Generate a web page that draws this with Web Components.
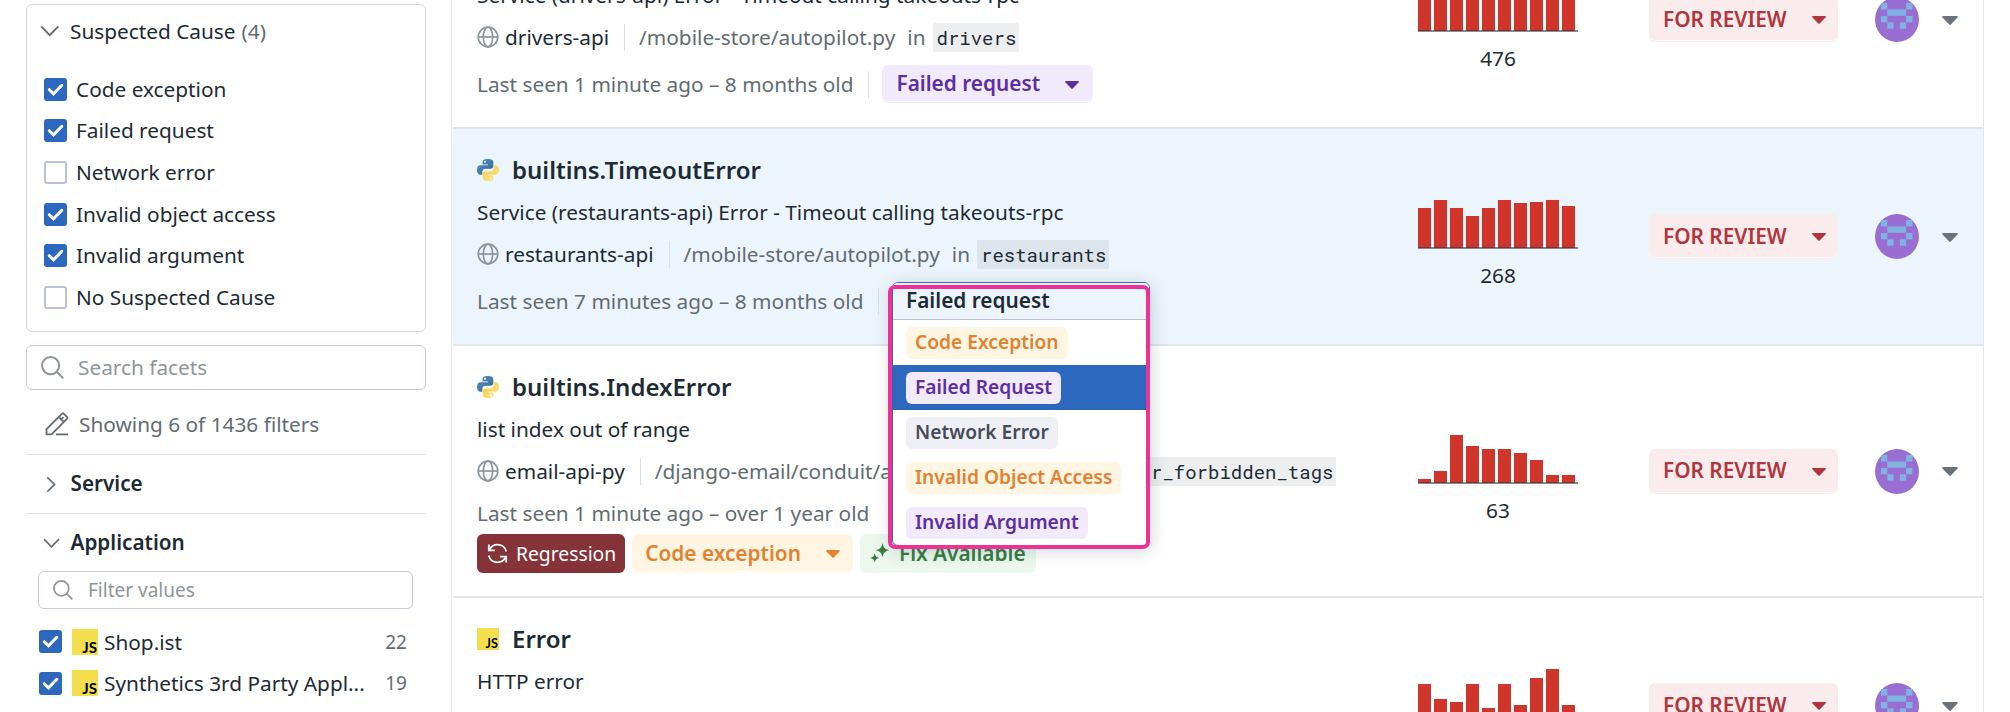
<!DOCTYPE html>
<html lang="en">
<head>
<meta charset="utf-8">
<title>Error Tracking</title>
<style>
  html, body { margin: 0; height: 100%; overflow: hidden; background: #fff; }
  body { font-family: "Noto Sans", sans-serif; font-size: 20.8px; color: #1c2b34; }
</style>
</head>
<body>
<et-page></et-page>
<script>
const define = (name, css, html) => {
  customElements.define(name, class extends HTMLElement {
    connectedCallback() {
      if (this.shadowRoot) return;
      const root = this.attachShadow({ mode: 'open' });
      root.innerHTML = `<style>*{box-sizing:border-box}:host{box-sizing:border-box}${css}</style>` +
        (typeof html === 'function' ? html(this) : html);
    }
  });
};

const ICONS = {
  down: ['0 0 20 12', '<path d="M1.2 1.2 10 10.2 18.8 1.2" fill="none" stroke="currentColor" stroke-width="2"/>'],
  right: ['0 0 12 20', '<path d="M1.5 1.3 10.2 10 1.5 18.7" fill="none" stroke="currentColor" stroke-width="2.1"/>'],
  caret: ['0 0 14 8', '<path d="M.8 0h12.400c.7 0 1 .8.5 1.300L7.700 7.600c-.4.4-1 .4-1.400 0L.3 1.300C-.2.8.1 0 .8 0z" fill="currentColor"/>'],
  search: ['0 0 22 22', '<g fill="none" stroke="currentColor" stroke-width="1.9"><circle cx="9.200" cy="9.200" r="8.200"/><path d="M15 15l6.300 6.300"/></g>'],
  pencil: ['0 0 24 24', '<g fill="none" stroke="currentColor" stroke-width="1.8" stroke-linejoin="round"><path d="M1.500 22.300v-5.100L16.900 1.800q1-1 2 0l3 3q1 1 0 2L6.500 22.300zM13.800 4.900l5 5M15.400 8.200l3-3"/><path d="M11 22.400h12"/></g>'],
  globe: ['0 0 22 22', '<g fill="none" stroke="currentColor" stroke-width="1.700"><circle cx="11" cy="11" r="9.800"/><ellipse cx="11" cy="11" rx="4.700" ry="9.800"/><path d="M1.200 11h19.600"/></g>'],
  python: ['0 0 24 24', '<defs><linearGradient id="b" x1="0" y1="0" x2="1" y2="1"><stop offset="0" stop-color="#5a93c4"/><stop offset="1" stop-color="#2f648f"/></linearGradient><linearGradient id="y" x1="0" y1="0" x2="1" y2="1"><stop offset="0" stop-color="#f6cc45"/><stop offset="1" stop-color="#fde58c"/></linearGradient></defs><path fill="url(#b)" d="M11.900 0C7.500 0 6 1.300 6 3.300V6h6.100v.9H3.600C1.300 6.900 0 9 0 12s1.300 5.100 3.400 5.100H5.800v-3.200c0-2 1.700-3.400 3.600-3.400h5.400c1.700 0 3-1.400 3-3V3.300C17.800 1.300 15.600 0 11.900 0zM8.700 1.900a1.150 1.150 0 1 1 0 2.300 1.150 1.150 0 0 1 0-2.300z"/><path fill="url(#y)" d="M12.100 24c4.400 0 5.900-1.300 5.900-3.300V18h-6.100v-.9h8.500c2.300 0 3.600-2.100 3.600-5.100s-1.300-5.100-3.400-5.100H18.200v3.200c0 2-1.700 3.400-3.600 3.400H9.200c-1.700 0-3 1.400-3 3v4.200C6.200 22.700 8.400 24 12.100 24zM15.300 22.100a1.150 1.150 0 1 1 0-2.300 1.150 1.150 0 0 1 0 2.300z"/>'],
  check: ['0 0 23 23', '<path d="M5.300 11.700l4.200 4.200 8.300-8.600" fill="none" stroke="#fff" stroke-width="3" stroke-linecap="round"/>'],
  cycle: ['0 0 22 22', '<g fill="none" stroke="currentColor" stroke-width="1.900"><path d="M1.900 1.500v6.200h6.300"/><path d="M2.300 7.400C4 3.900 7.200 1.700 11 1.700c4.500 0 8.200 3 9.200 7.200"/><path d="M20.100 20.500v-6.200h-6.300"/><path d="M19.700 14.600c-1.700 3.500-4.900 5.700-8.700 5.700-4.500 0-8.200-3-9.200-7.200"/></g>'],
  sparkle: ['0 0 20 20', '<path fill="currentColor" d="M12.500 0c.9 4.700 2.300 6.300 7 7.200-4.700.9-6.100 2.500-7 7.200-.9-4.700-2.300-6.300-7-7.200 4.700-.9 6.100-2.500 7-7.200zM4.700 10.300c.6 2.900 1.600 4 4.700 4.600-3.100.6-4.100 1.700-4.700 4.600C4.100 16.600 3.100 15.500 0 14.900c3.100-.6 4.100-1.700 4.700-4.600z"/>'],
};

/* Inline vector icon, sized by its w and h attributes */
define('et-icon', ':host{display:inline-flex;flex:none}svg{display:block}',
  el => { const [box, body] = ICONS[el.getAttribute('name')];
    return `<svg width="${el.getAttribute('w')}" height="${el.getAttribute('h')}" viewBox="${box}">${body}</svg>`; });

define('et-js', `:host{display:flex;flex:none;width:var(--s,26px);height:var(--s,26px);background:#f3df4e;align-items:flex-end;justify-content:flex-end;
  font:700 calc(var(--s,26px)*.58)/1 Lato,sans-serif;color:#000;padding:0 1px 0 0}`, '<span>JS</span>');

define('et-check', `:host{display:flex;flex:none;width:23px;height:23px;border-radius:3px;border:2px solid #bcc0da;background:#fff}
  :host([on]){border:0;background:#2c68be}`, el => el.hasAttribute('on') ? '<et-icon name="check" w="23" h="23"></et-icon>' : '');

define('et-facet', `:host{display:flex;align-items:center;height:41.6px;padding-left:17px}
  .t{margin-left:9px;white-space:nowrap;padding-bottom:1px}`,
  el => `<et-check ${el.hasAttribute('on') ? 'on' : ''}></et-check><span class="t"><slot></slot></span>`);

define('et-value', `:host{display:flex;align-items:center;height:41.600px;width:368px}
  et-js{margin-left:10px}.t{margin-left:6px;flex:1;white-space:nowrap}.n{font-size:19px;color:#626c73}`,
  el => `<et-check on></et-check><et-js></et-js><span class="t"><slot></slot></span><span class="n">${el.getAttribute('count')}</span>`);

define('et-search', `:host{display:flex;align-items:center;height:var(--h,45px);border:1px solid #c6c9df;border-radius:6px;color:#8f969b;padding-left:14px}
  span{margin-left:var(--g,14px);padding-bottom:1px}`, el => `<et-icon name="search" w="${el.getAttribute('icon')}" h="${el.getAttribute('icon')}"></et-icon><span><slot></slot></span>`);

define('et-section', `:host{display:flex;align-items:center;height:59px;border-top:1px solid #e0e0ea;font-weight:600;font-size:20.700px}
  .i{width:44.500px;padding-left:17px;display:flex;color:#626c73}.i.r{padding-left:20px}.t{padding-bottom:3px}`,
  el => `<span class="i ${el.hasAttribute('open') ? '' : 'r'}">${el.hasAttribute('open')
    ? '<et-icon name="down" w="17" h="10.5"></et-icon>' : '<et-icon name="right" w="10" h="17"></et-icon>'}</span><span class="t"><slot></slot></span>`);

define('et-sidebar', `:host{display:flex;flex-direction:column;width:400px;margin:4px 25px 0 26px;flex:none}
  .card{height:328px;border:1px solid #d4d6e6;border-radius:6px;flex:none}
  .head{display:flex;align-items:center;height:51px;padding-left:13px}
  .head et-icon{color:#626c73;margin-right:10.500px}
  .head i{font-style:normal;color:#626c73;margin-left:6px}
  .list{margin-top:12.500px}
  .main{margin-top:13px}
  .showing{display:flex;align-items:center;height:64px;padding-left:19px;color:#626c73;gap:10px;padding-top:4px}
  .showing span{padding-bottom:1px}
  .filter{--h:38px;--g:15px;margin:-1px 13px 0 12px;font-size:19px}
  .vals{margin:12px 0 0 13px}`,
  `<div class="card"><div class="head"><et-icon name="down" w="19.5" h="12"></et-icon>Suspected Cause<i>(4)</i></div>
   <div class="list"><et-facet on>Code exception</et-facet><et-facet on>Failed request</et-facet><et-facet>Network error</et-facet>
   <et-facet on>Invalid object access</et-facet><et-facet on>Invalid argument</et-facet><et-facet>No Suspected Cause</et-facet></div></div>
   <et-search class="main" icon="23">Search facets</et-search>
   <div class="showing"><et-icon name="pencil" w="24" h="24"></et-icon><span>Showing 6 of 1436 filters</span></div>
   <et-section>Service</et-section><et-section open>Application</et-section>
   <et-search class="filter" icon="20">Filter values</et-search>
   <div class="vals"><et-value count="22">Shop.ist</et-value><et-value count="19">Synthetics 3rd Party Appl...</et-value></div>`);

define('et-pill', `:host{display:inline-flex;align-items:center;height:38px;border-radius:6px;font-weight:600;padding:0 14px;white-space:nowrap;flex:none;background:var(--bg);color:var(--fg)}
  :host([caret]){box-shadow:inset 0 -1px var(--bg),inset 0 -2px rgba(255,255,255,.75)}
  .t{display:inline-flex;align-items:center;padding-bottom:2px}
  et-icon{margin:1px 0 0 var(--cg,25px)}
  :host([tone=purple]){--bg:#f0eafb;--fg:#5c2da3}
  :host([tone=orange]){--bg:#fef5e3;--fg:#e4812f}
  :host([tone=green]){--bg:#ecf8ee;--fg:#3a7d44}
  :host([tone=gray]){--bg:#eff0f5;--fg:#464a59}
  :host([tone=pink]){--bg:#faebec;--fg:#b0353c}
  :host([tone=dark]){--bg:#853238;--fg:#fff;font-weight:400;font-size:19.300px}
  :host([small]){height:32px;padding:0 9px;font-size:19.200px}`,
  el => `<span class="t"><slot></slot></span>${el.hasAttribute('caret') ? '<et-icon name="caret" w="14" h="8"></et-icon>' : ''}`);

define('et-bars', `:host{display:flex;flex-direction:column;align-items:center;width:160px}
  .c{display:flex;align-items:flex-end;gap:3px;width:160px;height:49px;position:relative}
  .c::after{content:"";position:absolute;left:0;right:0;bottom:0;height:2px;background:rgba(40,50,60,.55)}
  b{width:13px;background:#d0352b;margin-bottom:1px}
  .n{height:28px;line-height:28px;margin-top:12px}`,
  el => `<div class="c">${el.getAttribute('values').split(',').map(v => `<b style="height:${v}px"></b>`).join('')}</div><div class="n"><slot></slot></div>`);

define('et-avatar', ':host{display:flex;width:44px;height:45px;flex:none}',
  `<svg width="44" height="45" viewBox="0 0 44 45"><ellipse cx="22" cy="22.500" rx="22" ry="22.500" fill="#9a6dd2"/>
   <g fill="#80b3e1" transform="translate(6 6)"><path d="M0 0h6.300v6.400h18.800v-6.400h6.400v6.400h-6.400v6.400H6.300v-6.400H0zM0 12.900h6.300v6.300H0zM25.100 12.900h6.400v6.300h-6.400zM6.300 19.200h6.300v6.500H6.300zM18.900 19.200h6.200v6.500h-6.200z"/></g></svg>`);

define('et-row', `:host{display:flex;height:217px;border-bottom:2px solid #e3e5ee;padding-left:24px;flex:none}
  :host([tall]){height:252px}:host([selected]){background:#edf5fc}
  .text{flex:1;min-width:0;padding-top:24px;white-space:nowrap}
  .title{display:flex;align-items:center;gap:13px;height:33px;font-size:24px;font-weight:600}
  .msg{height:36px;margin-top:8px;line-height:36px}
  .meta{display:flex;align-items:center;height:36px;margin-top:6px}
  .meta et-icon{color:#8d969b;margin-right:6px}
  .path{color:#626c73;min-width:var(--pw,0)}
  .in{color:#626c73;margin:0 7px 0 12px}
  code{font:19px/29px "Roboto Mono","Liberation Mono",monospace;background:rgba(28,43,52,.08);padding:0 3px 0 4px;height:29px}
  hr{border:0;width:1px;height:27px;background:#dcdfe9;margin:0 14px 0 15px;flex:none}
  .seen{display:flex;align-items:center;height:38px;margin-top:10px;color:#626c73}
  :host([tall]) .seen{height:36px;margin-top:5.500px}
  .tags{display:flex;gap:7px;margin-top:3.500px}
  .side{display:flex;align-items:center;flex:none;padding-right:25px}
  et-bars{margin:16px 71px 0 0}.state{height:45px;width:189px;--cg:25px}
  et-avatar{margin:0 23px 0 37px}.more{color:#68737a;margin-top:1px}`,
  el => { const a = n => el.getAttribute(n); return `<div class="text">
   <div class="title">${a('lang') === 'js' ? '<et-js style="--s:22px"></et-js>' : '<et-icon name="python" w="22" h="22"></et-icon>'}<span>${a('heading')}</span></div>
   <div class="msg">${a('message')}</div>
   ${a('service') ? `<div class="meta"><et-icon name="globe" w="22" h="22"></et-icon><span>${a('service')}</span><hr><span class="path">${a('path')}</span><span class="in">in</span><code>${a('fn')}</code></div>
   <div class="seen"><span>${a('seen')}</span><slot name="cause"></slot></div><div class="tags"><slot name="tags"></slot></div>` : ''}</div>
   <div class="side"><et-bars values="${a('bars')}">${a('count') || ''}</et-bars>
   <et-pill class="state" tone="pink" caret>FOR REVIEW</et-pill><et-avatar></et-avatar>
   <et-icon class="more" name="caret" w="16" h="9"></et-icon></div>`; });

define('et-cause', `:host{display:flex;align-items:center}hr{border:0;width:1px;height:27px;background:#dcdfe9;margin:0 13px 0 15px}`, '<hr><slot></slot>');

define('et-option', `:host{display:flex;align-items:center;height:45px;padding-left:13px}:host([active]){background:#2c68be}`,
  el => `<et-pill small tone="${el.getAttribute('tone')}"><slot></slot></et-pill>`);

define('et-menu', `:host{position:absolute;left:888px;top:282px;width:262px;height:267px}
  .box{margin-left:4px;height:264px;border:1px solid #2c68be;border-radius:6px;background:#fff;box-shadow:0 4px 18px rgba(28,43,52,.22);overflow:hidden}
  .head{height:37px;background:#edf5fc;border-bottom:1px solid #b9bfd0;font-weight:600;padding-left:13px;line-height:34px}
  .ring{position:absolute;left:0;top:3px;width:262px;height:264px;border:4px solid #ec3296;border-radius:7px}`,
  `<div class="box"><div class="head">Failed request</div>
   <et-option tone="orange">Code Exception</et-option><et-option tone="purple" active>Failed Request</et-option>
   <et-option tone="gray">Network Error</et-option><et-option tone="orange">Invalid Object Access</et-option>
   <et-option tone="purple">Invalid Argument</et-option></div><div class="ring"></div>`);

define('et-page', `:host{display:flex;width:2010px;height:712px;overflow:hidden;position:relative}
  main{width:1533px;border:1px solid #e3e4ec;border-width:0 1px;padding-left:1px;display:flex;flex-direction:column}
  .first{margin-top:-88px}`,
  `<et-sidebar></et-sidebar><main>
  <et-row class="first" heading="builtins.TimeoutError" message="Service (drivers-api) Error - Timeout calling takeouts-rpc" service="drivers-api" path="/mobile-store/autopilot.py" fn="drivers" seen="Last seen 1 minute ago – 8 months old" bars="44,47,45,48,46,48,45,47,46,48" count="476">
    <et-cause slot="cause"><et-pill tone="purple" caret>Failed request</et-pill></et-cause></et-row>
  <et-row selected heading="builtins.TimeoutError" message="Service (restaurants-api) Error - Timeout calling takeouts-rpc" service="restaurants-api" path="/mobile-store/autopilot.py" fn="restaurants" seen="Last seen 7 minutes ago – 8 months old" bars="40,48,40,32,40,48,45,46.5,48,42" count="268">
    <et-cause slot="cause"></et-cause></et-row>
  <et-row tall heading="builtins.IndexError" message="list index out of range" service="email-api-py" path="/django-email/conduit/api" fn="filter_forbidden_tags" style="--pw:398px" seen="Last seen 1 minute ago – over 1 year old" bars="4,11.5,48,37,33.5,33.5,30,22.5,7.7,7.7" count="63">
    <et-pill slot="tags" tone="dark" style="padding:1px 9px 0 10px;height:39px"><et-icon name="cycle" w="21" h="21" style="margin-right:8px"></et-icon>Regression</et-pill>
    <et-pill slot="tags" tone="orange" caret style="height:39px;padding:0 13px">Code exception</et-pill>
    <et-pill slot="tags" tone="green" style="padding:0 10px;height:39px"><et-icon name="sparkle" w="20" h="20" style="margin-right:9px"></et-icon>Fix Available</et-pill></et-row>
  <et-row lang="js" heading="Error" message="HTTP error" bars="33,18,15,33,9,33,12,39,48,12"></et-row>
  </main><et-menu></et-menu>`);
</script>
</body>
</html>
